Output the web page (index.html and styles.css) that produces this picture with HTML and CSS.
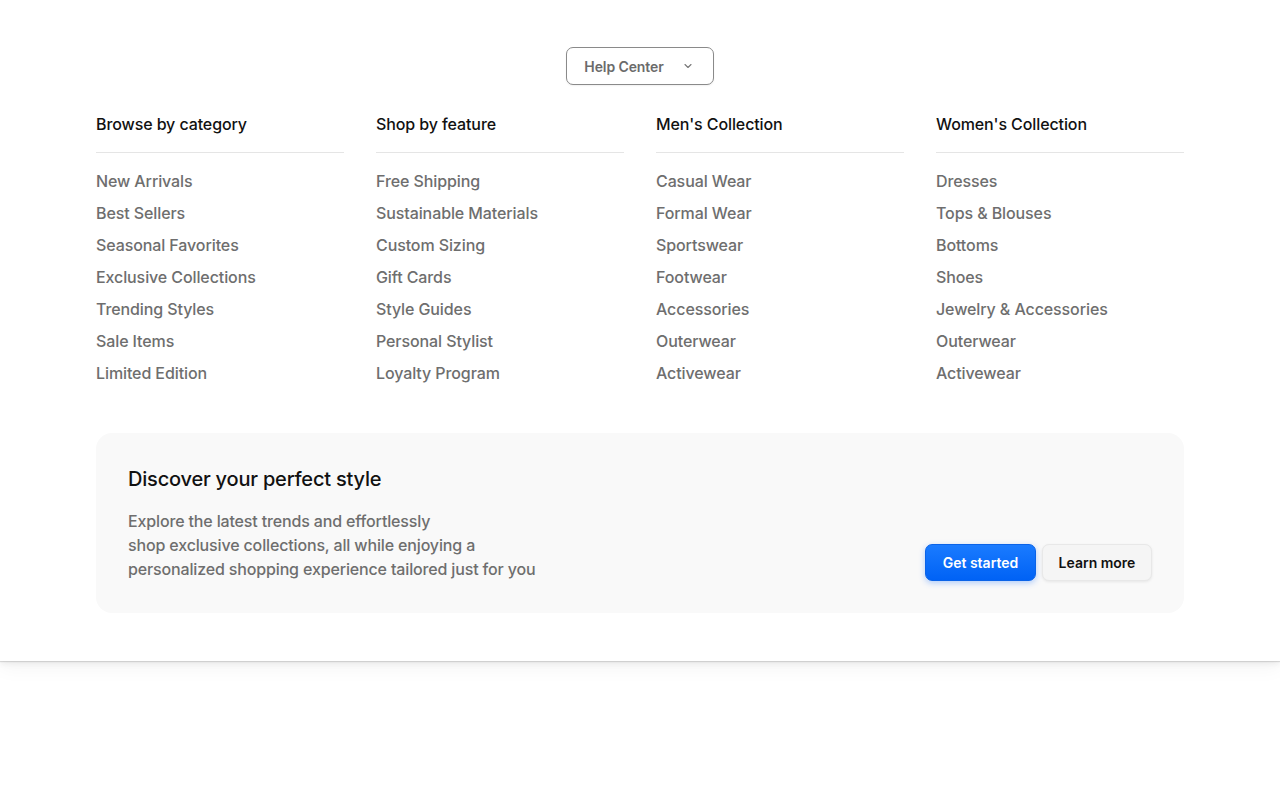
FILE: index.html
```html
<!DOCTYPE html>
<html lang="en">
<head>
<meta charset="utf-8">
<title>Menu</title>
<link rel="stylesheet" href="styles.css">
</head>
<body>
<div class="panel">
  <div class="top">
    <button class="help">Help Center
      <svg width="10" height="10" viewBox="0 0 10 10" fill="none"><path d="M2 3.5 L5 6.5 L8 3.5" stroke="#777" stroke-width="1.1" stroke-linecap="round" stroke-linejoin="round"/></svg>
    </button>
  </div>
  <div class="cols">
    <div class="col">
      <h3>Browse by category</h3>
      <ul>
        <li>New Arrivals</li><li>Best Sellers</li><li>Seasonal Favorites</li><li>Exclusive Collections</li><li>Trending Styles</li><li>Sale Items</li><li>Limited Edition</li>
      </ul>
    </div>
    <div class="col">
      <h3>Shop by feature</h3>
      <ul>
        <li>Free Shipping</li><li>Sustainable Materials</li><li>Custom Sizing</li><li>Gift Cards</li><li>Style Guides</li><li>Personal Stylist</li><li>Loyalty Program</li>
      </ul>
    </div>
    <div class="col">
      <h3>Men's Collection</h3>
      <ul>
        <li>Casual Wear</li><li>Formal Wear</li><li>Sportswear</li><li>Footwear</li><li>Accessories</li><li>Outerwear</li><li>Activewear</li>
      </ul>
    </div>
    <div class="col">
      <h3>Women's Collection</h3>
      <ul>
        <li>Dresses</li><li>Tops &amp; Blouses</li><li>Bottoms</li><li>Shoes</li><li>Jewelry &amp; Accessories</li><li>Outerwear</li><li>Activewear</li>
      </ul>
    </div>
  </div>
  <div class="card">
    <div class="card-text">
      <h2>Discover your perfect style</h2>
      <p>Explore the latest trends and effortlessly<br>shop exclusive collections, all while enjoying a<br>personalized shopping experience tailored just for you</p>
    </div>
    <div class="actions">
      <button class="btn primary">Get started</button>
      <button class="btn secondary">Learn more</button>
    </div>
  </div>
</div>
</body>
</html>
```

FILE: styles.css
```css
* { box-sizing: border-box; }
html, body { margin: 0; padding: 0; background: #fff; }
body { min-height: 800px; font-family: Inter, "Noto Sans", sans-serif; color: #171717; -webkit-font-smoothing: antialiased; }

.panel {
  position: relative;
  z-index: 1;
  background: #fff;
  padding: 47px 96px 48px;
  box-shadow: 0 1px 1px rgba(0,0,0,0.12), 0 3px 6px rgba(0,0,0,0.06), 0 8px 18px rgba(0,0,0,0.04);
}

.top { display: flex; justify-content: center; }
.help {
  display: flex; align-items: center; gap: 19px;
  height: 38px; padding: 0 20px 0 17px;
  border: 1px solid #8a8a8a; border-radius: 7px;
  background: #fff;
  font-family: inherit; font-size: 14px; font-weight: 600; color: #6b6b6b;
  letter-spacing: -0.1px;
  box-shadow: 0 1px 2px rgba(0,0,0,0.06);
  white-space: nowrap;
}

.cols {
  display: grid; grid-template-columns: repeat(4, 1fr); gap: 32px;
  margin-top: 22px;
}
.col h3 {
  margin: 0; font-size: 16px; font-weight: 500; line-height: 24px; color: #111;
  padding: 5px 0 16px;
  border-bottom: 1px solid #e5e5e5;
  letter-spacing: -0.1px;
}
.col ul { list-style: none; margin: 0; padding: 0; padding-top: 16px; display: flex; flex-direction: column; gap: 8px; }
.col li { font-size: 16px; font-weight: 500; line-height: 24px; color: #6e6e6e; letter-spacing: -0.1px; }

.card {
  margin-top: 48px;
  background: #f9f9f9; border-radius: 16px;
  padding: 32px;
  display: flex; justify-content: space-between; align-items: flex-end;
}
.card h2 { margin: 0; font-size: 20px; font-weight: 500; line-height: 28px; color: #111; letter-spacing: -0.2px; }
.card p { margin: 16px 0 0; font-size: 16px; font-weight: 500; line-height: 24px; color: #6e6e6e; letter-spacing: -0.15px; }

.actions { display: flex; gap: 6px; }
.btn {
  height: 37px; border-radius: 7px; font-family: inherit; font-size: 14px; font-weight: 600;
  padding: 0; white-space: nowrap;
}
.primary {
  width: 111px;
  background: linear-gradient(#1a7bff, #0062f5);
  color: #fff; border: 1px solid #0a63e8;
  box-shadow: 0 2px 6px rgba(0,100,255,0.3);
}
.secondary {
  width: 110px;
  background: #f5f5f5; color: #111; border: 1px solid #e8e8e8;
  box-shadow: 0 1px 3px rgba(0,0,0,0.08);
}
```
